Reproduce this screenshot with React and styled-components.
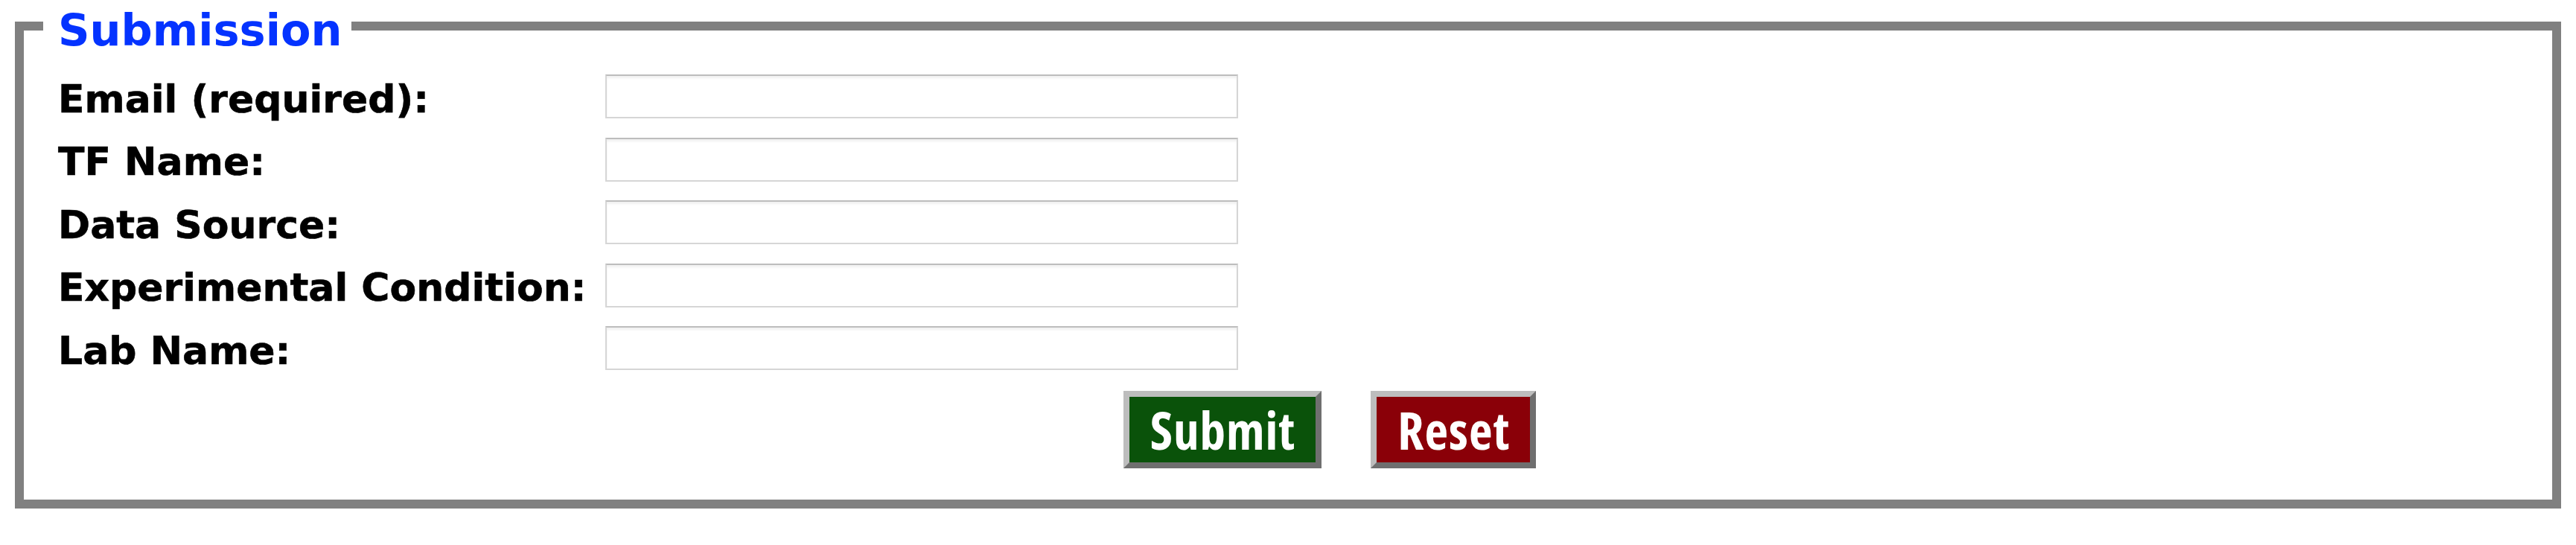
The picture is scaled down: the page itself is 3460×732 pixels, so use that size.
import React from "react";
import styled, { createGlobalStyle } from "styled-components";

const GlobalStyle = createGlobalStyle`
  html, body {
    margin: 0;
    padding: 0;
    background: #ffffff;
  }
  body {
    font-family: "DejaVu Sans", Verdana, sans-serif;
  }
`;

const Page = styled.main`
  padding: 0 20px;
`;

const Panel = styled.fieldset`
  margin: -6px 0 0;
  padding: 25px 46px 42px;
  border: 12px solid #808080;
  min-width: 0;
`;

const Legend = styled.legend`
  padding: 12px 13px 0 20px;
  margin-left: -20px;
  font-size: 59px;
  font-weight: bold;
  color: #0433ff;
`;

const Fields = styled.div`
  display: grid;
  grid-template-columns: 735px 850px;
  grid-auto-rows: 59px;
  row-gap: 25.5px;
  align-items: center;
`;

const Label = styled.label`
  padding-top: 6px;
  font-size: 52px;
  font-weight: bold;
  color: #000;
  white-space: nowrap;
  -webkit-text-stroke: 0.6px #000;
`;

const Input = styled.input`
  box-sizing: border-box;
  width: 850px;
  height: 59px;
  margin: 0;
  border: 2px solid #d6d6d6;
  border-top-color: #bdbdbd;
  box-shadow: inset 0 3px 3px rgba(0, 0, 0, 0.06);
  background: #fff;
  font-size: 30px;
  outline: none;
`;

const Actions = styled.div`
  display: flex;
  justify-content: center;
  gap: 66px;
  margin-top: 28px;
  padding-left: 112px;
`;

const Button = styled.button`
  box-sizing: border-box;
  height: 104px;
  padding: 0 27px 0 28px;
  border: 8px solid;
  border-color: #bdbdbd #6f6f6f #6f6f6f #bdbdbd;
  background: ${(p) => (p.$tone === "reset" ? "#8a0008" : "#0a520a")};
  color: #fff;
  font-family: "Open Sans", sans-serif;
  font-stretch: 75%;
  font-size: 69px;
  font-weight: bold;
  letter-spacing: 1px;
  line-height: 1;
  cursor: pointer;
`;

const fields = [
  { id: "email", label: "Email (required):" },
  { id: "tf", label: "TF Name:" },
  { id: "source", label: "Data Source:" },
  { id: "condition", label: "Experimental Condition:" },
  { id: "lab", label: "Lab Name:" }
];

export default function App() {
  return (
    <>
      <GlobalStyle />
      <Page>
        <form onSubmit={(e) => e.preventDefault()}>
          <Panel>
            <Legend>Submission</Legend>
            <Fields>
              {fields.map((f) => (
                <React.Fragment key={f.id}>
                  <Label htmlFor={f.id}>{f.label}</Label>
                  <Input id={f.id} name={f.id} type="text" />
                </React.Fragment>
              ))}
            </Fields>
            <Actions>
              <Button type="submit">Submit</Button>
              <Button type="reset" $tone="reset">Reset</Button>
            </Actions>
          </Panel>
        </form>
      </Page>
    </>
  );
}
